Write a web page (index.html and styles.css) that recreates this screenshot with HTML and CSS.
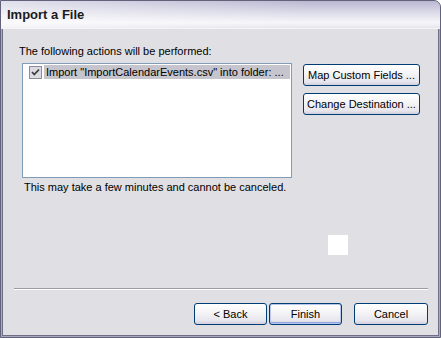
FILE: index.html
```html
<!DOCTYPE html>
<html lang="en">
<head>
<meta charset="UTF-8">
<title>Import a File</title>
<link rel="stylesheet" href="styles.css">
</head>
<body>

<div class="window">
  <div class="titlebar">Import a File</div>

  <div class="body">
    <div class="main">
      <p class="label">The following actions will be performed:</p>

      <div class="row">
        <div class="list">
          <div class="item">
            <span class="check">
              <svg width="11" height="11" viewBox="0 0 11 11">
                <path d="M2 5 L4.3 7.5 L9 2.5" fill="none" stroke="#3c3c46" stroke-width="1.8"/>
              </svg>
            </span>
            <span class="item-text">Import "ImportCalendarEvents.csv" into folder: ...</span>
          </div>
        </div>
        <div class="side">
          <button class="btn wide">Map Custom Fields ...</button>
          <button class="btn wide">Change Destination ...</button>
        </div>
      </div>

      <p class="note">This may take a few minutes and cannot be canceled.</p>
      <div class="blank"></div>
    </div>

    <div class="sep"></div>

    <div class="footer">
      <button class="btn back">&lt; Back</button>
      <button class="btn default">Finish</button>
      <button class="btn cancel">Cancel</button>
    </div>
  </div>
</div>

</body>
</html>
```

FILE: styles.css
```css
:root{
  --face:#e0dfe3;
  --frame:#a8a8be;
  --edge:#62627a;
}
*{box-sizing:border-box}
body{
  margin:0;
  font-family:"Liberation Sans", Arial, sans-serif;
  font-size:11px;
  color:#000;
  background:#fff;
}

/* WINDOW */
.window{
  width:441px;
  height:338px;
  display:flex;
  flex-direction:column;
  background:var(--frame);
  border:1px solid var(--edge);
  border-radius:0 7px 0 0;
  overflow:hidden;
}
.titlebar{
  height:28px;
  line-height:27px;
  padding-left:6px;
  font-size:13px;
  font-weight:bold;
  color:#1a1a1a;
  border-bottom:1px solid #f4f4f8;
  background:
    linear-gradient(90deg,rgba(255,255,255,.55),rgba(255,255,255,0) 70%),
    linear-gradient(#b9b8d2,#d9d8e6 40%,#f6f6fa 80%,#e6e5ec);
}
.body{
  flex:1;
  display:flex;
  flex-direction:column;
  margin:0 1px 1px;
  background:var(--face);
  border:1px solid #6e6e86;
  border-top:none;
}

/* MAIN AREA */
.main{
  flex:1;
  padding:16px 0 0 16px;
}
.label,.note{
  margin:0;
  line-height:13px;
}
.row{
  display:flex;
  margin:5px 0 0 3px;
}
.list{
  width:270px;
  height:115px;
  background:#fff;
  border:1px solid #7f9db9;
  padding-top:1px;
}
.item{
  display:flex;
  align-items:center;
  padding-left:6px;
  height:14px;
}
.check{
  width:13px;
  height:13px;
  border:1px solid #8c8c96;
  background:#dcdbe2;
  display:flex;
  align-items:center;
  justify-content:center;
}
.item-text{
  flex:1;
  margin:0 1px 0 2px;
  padding-left:2px;
  height:14px;
  line-height:14px;
  background:#c6c5cd;
  white-space:nowrap;
  overflow:hidden;
}
.side{
  display:flex;
  flex-direction:column;
  gap:7px;
  margin:1px 0 0 11px;
}
.note{
  margin:3px 0 0 5px;
}
.blank{
  width:20px;
  height:20px;
  background:#fff;
  margin:41px 0 0 309px;
}

/* BUTTONS */
.btn{
  height:22px;
  width:73px;
  padding:0;
  font-family:inherit;
  font-size:11px;
  color:#000;
  border:1px solid #003c74;
  border-radius:3px;
  background:linear-gradient(#ffffff,#f4f4f6 45%,#e6e5ec 85%,#cfcedb);
}
.btn.wide{width:117px}
.btn.default{
  box-shadow:inset 0 0 0 1px #b8c8ec, inset 0 -1px 0 1px #8ea4e0;
}
.back{margin-right:2px}
.default{margin-right:12px}
.cancel{width:74px}

/* FOOTER */
.sep{
  height:2px;
  margin:0 10px 0 11px;
  border-top:1px solid #9d9ca4;
  border-bottom:1px solid #fff;
}
.footer{
  height:45px;
  display:flex;
  justify-content:flex-end;
  padding:13px 10px 0 0;
}
```
